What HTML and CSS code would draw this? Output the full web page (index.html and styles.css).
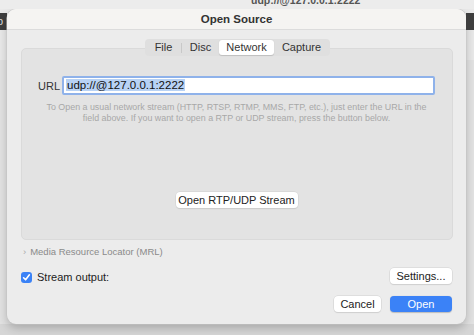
FILE: index.html
```html
<!DOCTYPE html>
<html>
<head>
<meta charset="utf-8">
<link rel="stylesheet" href="styles.css">
</head>
<body>
<div class="desk">
  <div class="backbar"><span class="backtitle">udp://@127.0.0.1:2222</span></div>
  <div class="row">
    <div class="side left"><div class="strip">p</div></div>
    <div class="dialog">
      <div class="titlebar">Open Source</div>
      <div class="content">
        <div class="tabs">
          <div class="tab">File</div>
          <div class="sep"></div>
          <div class="tab">Disc</div>
          <div class="tab sel">Network</div>
          <div class="tab">Capture</div>
        </div>
        <div class="group">
          <div class="urlrow">
            <span class="label">URL</span>
            <div class="input"><span class="selected">udp://@127.0.0.1:2222</span></div>
          </div>
          <p class="help">To Open a usual network stream (HTTP, RTSP, RTMP, MMS, FTP, etc.), just enter the URL in the<br>field above. If you want to open a RTP or UDP stream, press the button below.</p>
          <div class="btnrow"><div class="btn rtp">Open RTP/UDP Stream</div></div>
        </div>
        <div class="mrl"><span class="chev">›</span>Media Resource Locator (MRL)</div>
        <div class="streamrow">
          <div class="check">
            <span class="box"><svg width="9" height="9" viewBox="0 0 9 9"><path d="M1.6 4.8 L3.6 6.8 L7.4 1.8" fill="none" stroke="#fff" stroke-width="1.6" stroke-linecap="round" stroke-linejoin="round"/></svg></span>
            <span>Stream output:</span>
          </div>
          <div class="btn wide">Settings...</div>
        </div>
        <div class="actions">
          <div class="btn cancel">Cancel</div>
          <div class="btn wide primary">Open</div>
        </div>
      </div>
    </div>
    <div class="side right"><div class="strip"></div></div>
  </div>
</div>
</body>
</html>
```

FILE: styles.css
```css
* { box-sizing: border-box; }
html, body { margin: 0; padding: 0; }
body {
  width: 474px;
  height: 335px;
  overflow: hidden;
  background: #dcdcdc;
  font-family: "Liberation Sans", Arial, sans-serif;
  color: #222;
}
.desk {
  width: 474px;
  height: 335px;
  background: linear-gradient(#e9e9e9 0, #e9e9e9 60px, #e2e2e2 60px, #e2e2e2 324px, #d6d6d6 324px);
}
.backbar {
  height: 9px;
  overflow: hidden;
  position: relative;
  background: #ececec;
}
.backtitle {
  position: absolute;
  left: 251px;
  top: -6px;
  font-size: 10.5px;
  font-weight: bold;
  color: #555;
  line-height: 12px;
  white-space: nowrap;
}
.row {
  display: flex;
}
.side {
  padding-top: 4px;
}
.side.left { width: 7px; }
.side.right { width: 8px; }
.strip {
  height: 17px;
  background: #3e3e3e;
  color: #ddd;
  font-size: 11px;
  line-height: 17px;
  overflow: hidden;
}
.side.left .strip { text-indent: -3px; }
.dialog {
  width: 459px;
  height: 315px;
  background: #ececec;
  border-radius: 9px;
  box-shadow: 0 0 0 0.5px #c4c4c4, 0 4px 10px rgba(0,0,0,0.22);
  overflow: hidden;
  display: flex;
  flex-direction: column;
}
.titlebar {
  height: 21px;
  background: #f5f4f2;
  border-bottom: 1px solid #dcdcdc;
  text-align: center;
  font-size: 11.5px;
  font-weight: bold;
  line-height: 20px;
  color: #333;
}
.content {
  padding: 9px 13px 0 14px;
  display: flex;
  flex-direction: column;
}
.tabs {
  align-self: center;
  display: flex;
  align-items: center;
  height: 17px;
  background: #dfdfdf;
  border-radius: 4px;
  padding: 1px;
  margin-bottom: -8px;
  position: relative;
  z-index: 1;
  margin-left: 1px;
  font-size: 11px;
}
.tab {
  height: 15px;
  line-height: 15px;
  color: #333;
  border-radius: 3px;
  text-align: center;
  white-space: nowrap;
}
.tab:nth-child(1) { width: 35px; }
.tab:nth-child(3) { width: 37px; }
.tab.sel { width: 55px; background: #fff; box-shadow: 0 0.5px 1px rgba(0,0,0,0.15); }
.tab:nth-child(5) { width: 55px; }
.sep { width: 1px; height: 10px; background: #c8c8c8; }
.group {
  height: 192px;
  background: #e3e3e3;
  border-radius: 5px;
  border: 1px solid #dadada;
  padding: 27px 17px 0 16px;
  display: flex;
  flex-direction: column;
}
.urlrow {
  display: flex;
  align-items: center;
  gap: 7px;
}
.label { font-size: 11px; color: #333; width: 17px; }
.input {
  flex: 1;
  height: 19px;
  background: #fff;
  border: 2px solid #8fb2ea;
  border-radius: 2px;
  font-size: 11.5px;
  line-height: 15px;
  padding-left: 2px;
  color: #111;
}
.selected { background: #b8d2f4; padding: 0 1px; }
.help {
  margin: 7px -10px 0 -10px;
  text-align: center;
  font-size: 8.9px;
  line-height: 11px;
  color: #a8a8a8;
  white-space: nowrap;
}
.btnrow {
  display: flex;
  justify-content: center;
  margin-top: 68px;
}
.btn {
  height: 16px;
  background: #fff;
  border-radius: 4px;
  box-shadow: 0 0 0 0.5px #d0d0d0, 0 1px 1px rgba(0,0,0,0.12);
  font-size: 11px;
  line-height: 16px;
  text-align: center;
  color: #222;
  white-space: nowrap;
}
.btn.rtp { width: 122px; }
.mrl {
  margin-top: 6px;
  font-size: 9.5px;
  color: #8a8a8a;
  padding-left: 2px;
  height: 12px;
  line-height: 12px;
}
.chev { margin-right: 4px; color: #aaa; }
.streamrow {
  margin-top: 10px;
  display: flex;
  justify-content: space-between;
  align-items: center;
  padding-right: 1px;
}
.check {
  display: flex;
  align-items: center;
  gap: 5px;
  font-size: 11px;
  color: #222;
  padding-top: 2px;
}
.box {
  width: 11px;
  height: 11px;
  border-radius: 3px;
  background: #3b82f6;
  display: flex;
  align-items: center;
  justify-content: center;
}
.box svg { display: block; }
.btn.wide { width: 62px; }
.actions {
  margin-top: 12px;
  display: flex;
  justify-content: flex-end;
  gap: 9px;
  padding-right: 1px;
}
.btn.cancel { width: 47px; }
.btn.primary {
  background: #3b82f7;
  color: #fff;
  box-shadow: 0 0.5px 1px rgba(0,0,0,0.2);
}
```
